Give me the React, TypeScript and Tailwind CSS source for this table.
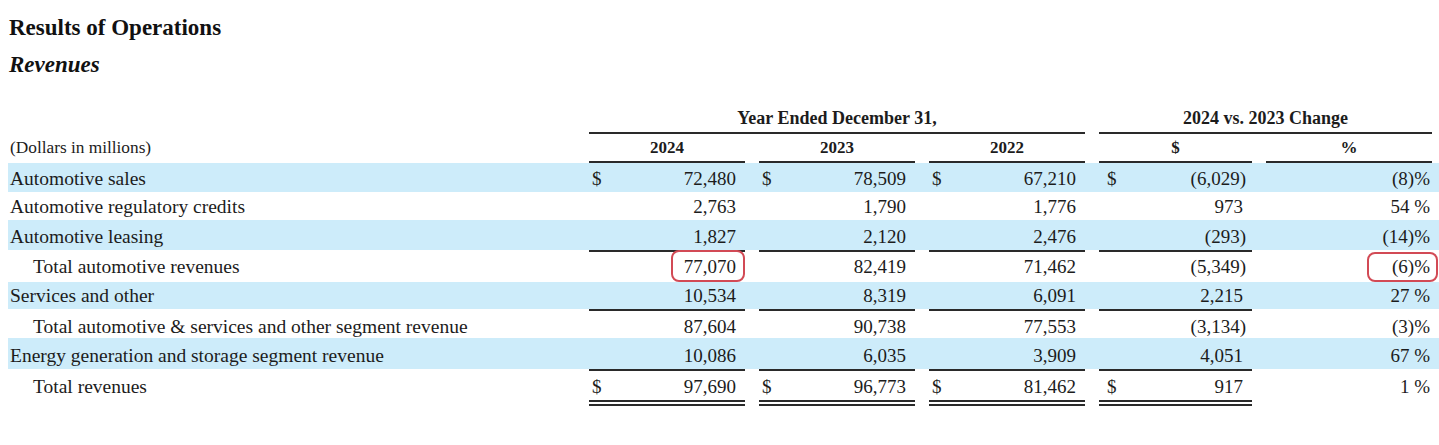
import React from 'react';

type Cell = { v: string; d?: boolean; neg?: boolean };

interface RowDef {
  label: string;
  indent?: boolean;
  blue?: boolean;
  h: string;
  pt: string;
  lh: string;
  cols: Cell[];
  pct: string;
  circle?: boolean;
  ruleAfter?: 'single' | 'double';
}

const ROWS: RowDef[] = [
  {
    label: 'Automotive sales',
    blue: true,
    h: 'h-[29px]',
    pt: 'pt-[2px]',
    lh: 'leading-[28px]',
    cols: [
      { v: '72,480', d: true },
      { v: '78,509', d: true },
      { v: '67,210', d: true },
      { v: '(6,029)', d: true, neg: true },
    ],
    pct: '(8)%',
  },
  {
    label: 'Automotive regulatory credits',
    h: 'h-[28px]',
    pt: 'pt-[1px]',
    lh: 'leading-[28px]',
    cols: [{ v: '2,763' }, { v: '1,790' }, { v: '1,776' }, { v: '973' }],
    pct: '54 %',
  },
  {
    label: 'Automotive leasing',
    blue: true,
    h: 'h-[30px]',
    pt: 'pt-[4px]',
    lh: 'leading-[26px]',
    cols: [{ v: '1,827' }, { v: '2,120' }, { v: '2,476' }, { v: '(293)', neg: true }],
    pct: '(14)%',
    ruleAfter: 'single',
  },
  {
    label: 'Total automotive revenues',
    indent: true,
    h: 'h-[30px]',
    pt: 'pt-[1px]',
    lh: 'leading-[28px]',
    cols: [{ v: '77,070' }, { v: '82,419' }, { v: '71,462' }, { v: '(5,349)', neg: true }],
    pct: '(6)%',
    circle: true,
  },
  {
    label: 'Services and other',
    blue: true,
    h: 'h-[27px]',
    pt: 'pt-0',
    lh: 'leading-[27px]',
    cols: [{ v: '10,534' }, { v: '8,319' }, { v: '6,091' }, { v: '2,215' }],
    pct: '27 %',
    ruleAfter: 'single',
  },
  {
    label: 'Total automotive & services and other segment revenue',
    indent: true,
    h: 'h-[27px]',
    pt: 'pt-[2px]',
    lh: 'leading-[28px]',
    cols: [{ v: '87,604' }, { v: '90,738' }, { v: '77,553' }, { v: '(3,134)', neg: true }],
    pct: '(3)%',
  },
  {
    label: 'Energy generation and storage segment revenue',
    blue: true,
    h: 'h-[31px]',
    pt: 'pt-[4px]',
    lh: 'leading-[28px]',
    cols: [{ v: '10,086' }, { v: '6,035' }, { v: '3,909' }, { v: '4,051' }],
    pct: '67 %',
    ruleAfter: 'single',
  },
  {
    label: 'Total revenues',
    indent: true,
    h: 'h-[28px]',
    pt: 'pt-[2px]',
    lh: 'leading-[28px]',
    cols: [
      { v: '97,690', d: true },
      { v: '96,773', d: true },
      { v: '81,462', d: true },
      { v: '917', d: true },
    ],
    pct: '1 %',
    ruleAfter: 'double',
  },
];

// column widths measured from the filing layout, 14px gutters between
const COL_W = ['w-[156px]', 'w-[156px]', 'w-[156px]', 'w-[153px]'];

function Rule({ kind }: { kind: 'single' | 'double' }) {
  const seg =
    kind === 'single'
      ? 'h-[2px] bg-[#2a2a2a]'
      : 'h-[6px] border-t-2 border-b-2 border-[#2a2a2a]';
  return (
    <div className={`flex ${kind === 'single' ? 'h-[2px]' : 'h-[8px] pt-[1px]'}`}>
      <div className="w-[581px] shrink-0" />
      {COL_W.map((w, i) => (
        <div key={i} className={`${w} shrink-0 ${i > 0 ? 'ml-[14px]' : ''} ${seg}`} />
      ))}
    </div>
  );
}

function DataRow({ row }: { row: RowDef }) {
  return (
    <div className={`flex ${row.h} ${row.blue ? 'bg-[#cdecfa]' : ''}`}>
      <div
        className={`w-[581px] shrink-0 text-[19.5px] ${row.pt} ${row.lh} ${
          row.indent ? 'pl-[25px]' : 'pl-[2px]'
        }`}
      >
        {row.label}
      </div>
      {row.cols.map((c, i) => (
        <div
          key={i}
          className={`relative flex justify-between shrink-0 ${COL_W[i]} ${
            i > 0 ? 'ml-[14px]' : ''
          } ${row.pt} ${row.lh} ${i === 3 ? 'pl-[8px]' : 'pl-[3px]'} ${
            c.neg ? 'pr-[6px]' : 'pr-[9px]'
          }`}
        >
          <span>{c.d ? '$' : ''}</span>
          <span>{c.v}</span>
          {row.circle && i === 0 && (
            <div className="absolute right-0 top-[-2px] bottom-0 w-[74px] rounded-[8px] border-2 border-[#d24a55]" />
          )}
        </div>
      ))}
      <div
        className={`relative ml-[14px] w-[166px] shrink-0 text-right pr-[2px] ${row.pt} ${row.lh}`}
      >
        {row.pct}
        {row.circle && (
          <div className="absolute right-[-6px] top-0 bottom-0 w-[71px] rounded-[8px] border-2 border-[#d24a55]" />
        )}
      </div>
    </div>
  );
}

export default function App() {
  return (
    <div
      className="w-[1439px] h-[445px] overflow-hidden bg-white pl-[8px] pt-[14px] text-[#1c1c1c]"
      style={{ fontFamily: '"Liberation Serif", "Times New Roman", serif' }}
    >
      {/* Headings */}
      <h1 className="h-[28px] pl-[1px] text-[23px] font-bold leading-[28px] text-[#111]">
        Results of Operations
      </h1>
      <h2 className="mt-[9px] h-[28px] pl-[1px] text-[23px] font-bold italic leading-[28px] text-[#111]">
        Revenues
      </h2>

      {/* Table header */}
      <div className="mt-[26px] flex text-[18px] font-bold">
        <div className="w-[581px] shrink-0" />
        <div className="w-[496px] shrink-0 border-b-2 border-[#2a2a2a] text-center leading-[27px]">
          Year Ended December 31,
        </div>
        <div className="ml-[14px] w-[333px] shrink-0 border-b-2 border-[#2a2a2a] text-center leading-[27px]">
          2024 vs. 2023 Change
        </div>
      </div>
      <div className="flex text-[17px]">
        <div className="w-[581px] shrink-0 pl-[2px] text-[17.3px] leading-[27px]">
          (Dollars in millions)
        </div>
        {['2024', '2023', '2022', '$'].map((t, i) => (
          <div
            key={t}
            className={`${COL_W[i]} shrink-0 ${
              i > 0 ? 'ml-[14px]' : ''
            } border-b-2 border-[#2a2a2a] text-center font-bold leading-[27px]`}
          >
            {t}
          </div>
        ))}
        <div className="ml-[14px] w-[166px] shrink-0 border-b-2 border-[#2a2a2a] text-center font-bold leading-[27px]">
          %
        </div>
      </div>

      {/* Rows */}
      <div className="text-[19px]">
        {ROWS.map((r) => (
          <React.Fragment key={r.label}>
            <DataRow row={r} />
            {r.ruleAfter && <Rule kind={r.ruleAfter} />}
          </React.Fragment>
        ))}
      </div>
    </div>
  );
}
